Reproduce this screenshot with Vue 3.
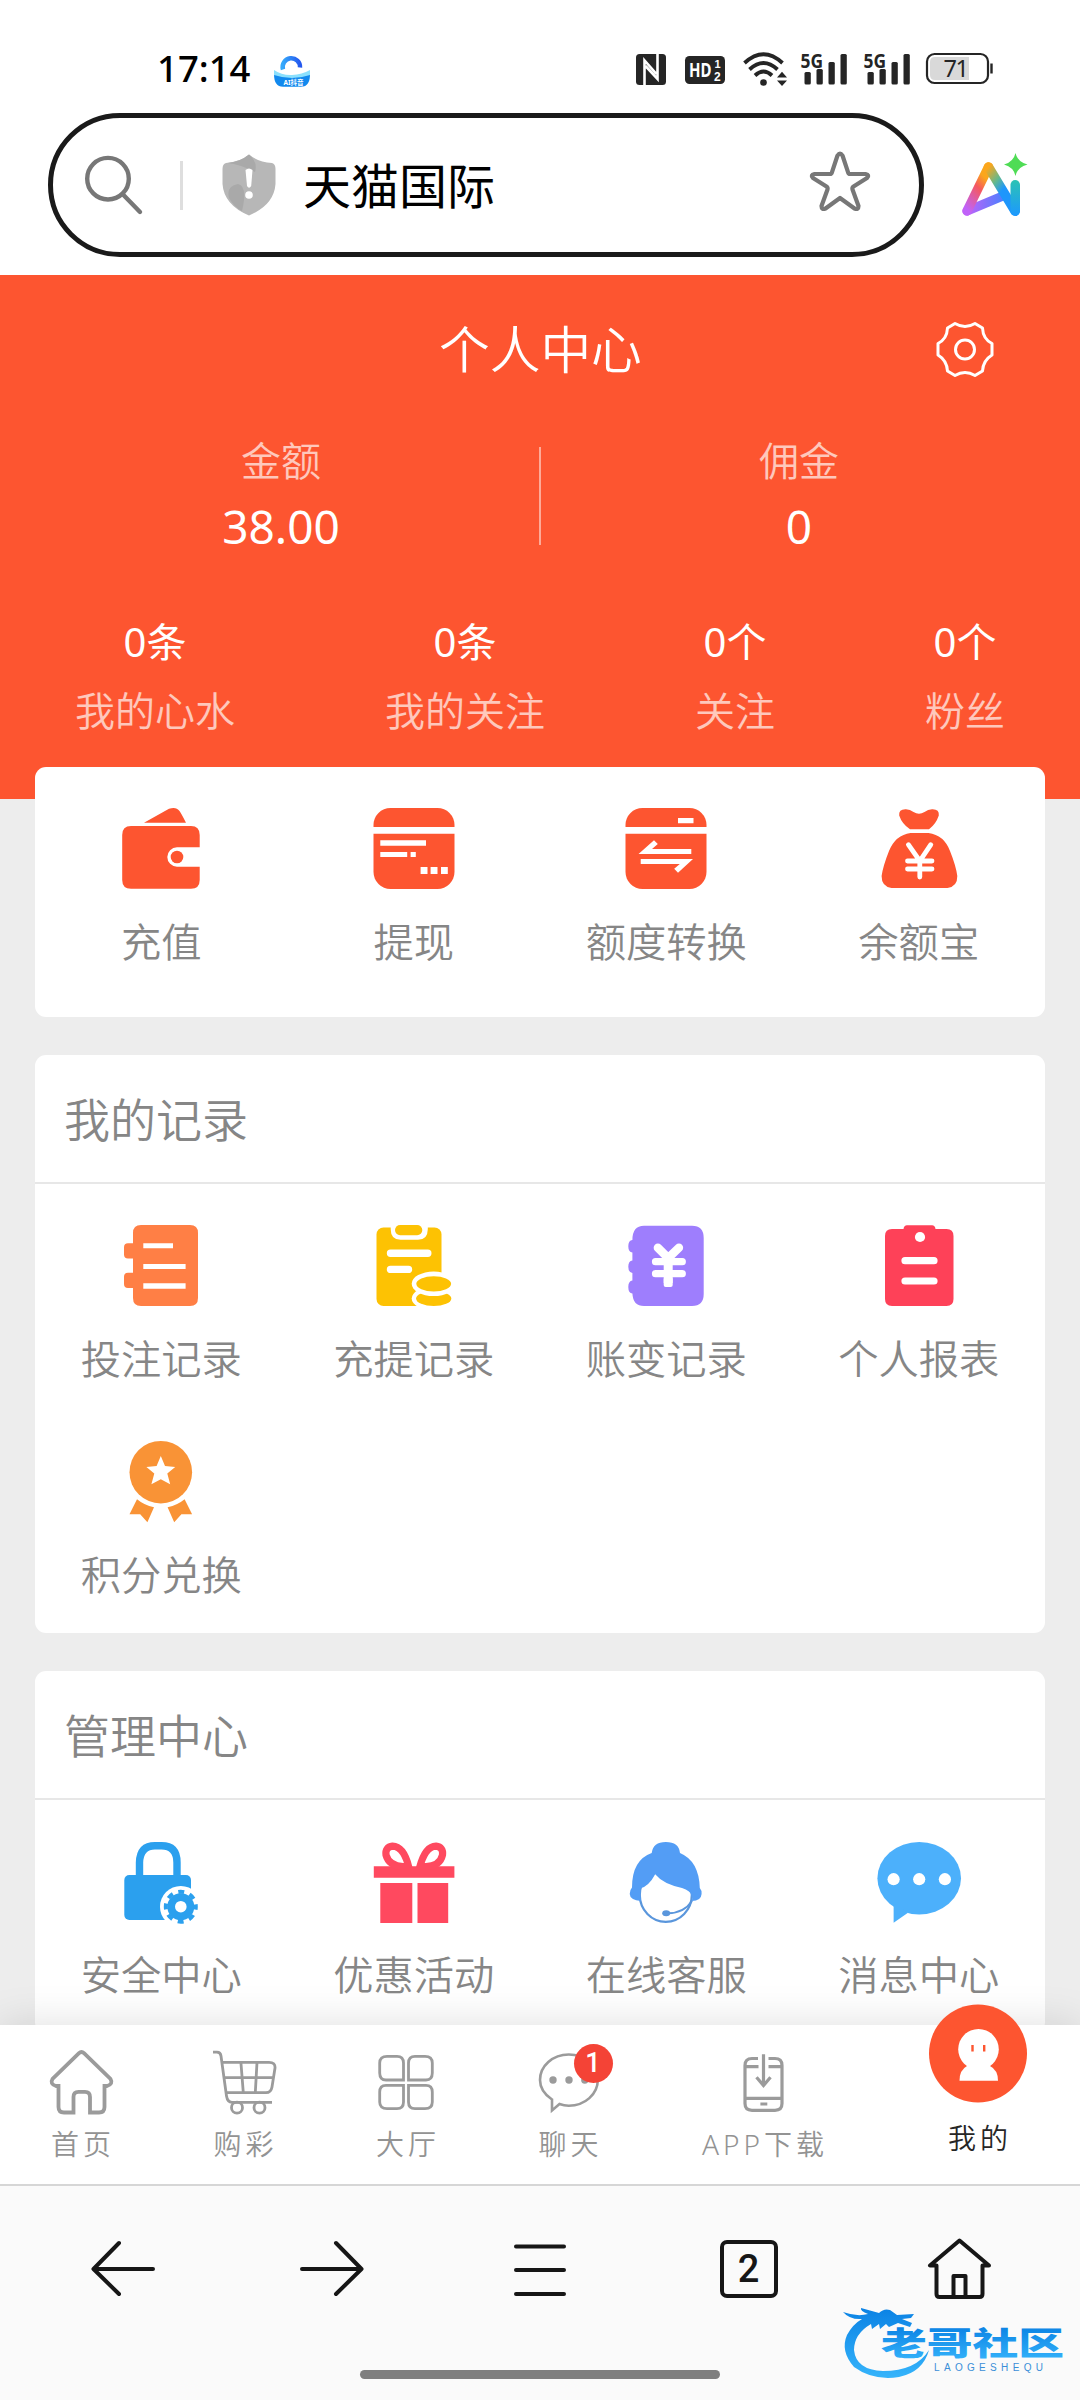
<script setup>
const stats = [
  { value: '0条', label: '我的心水' },
  { value: '0条', label: '我的关注' },
  { value: '0个', label: '关注' },
  { value: '0个', label: '粉丝' },
]

const yen = 'M31.4 37.7 L42.8 54 L53.8 37.7 M42.8 54 V70 M30.5 54 H55 M30.5 62 H55'

const wallet = [
  { label: '充值', svg: `<path fill="#fd5530" d="M25 15.7 L50 1.8 Q57 -.8 60.5 4 Q62 6 67 15.7Z"/><path fill="#fd5530" d="M12 19 H72 Q80.700 19 80.700 28 V40.300 H58 A9.700 9.700 0 0 0 58 59.700 H80.700 V73 Q80.700 81.700 72 81.700 H12 Q3.200 81.700 3.200 73 V28 Q3.200 19 12 19Z"/><circle cx="58" cy="50" r="6.300" fill="#fd5530"/>` },
  { label: '提现', svg: `<rect x="1.500" y="1" width="81" height="81" rx="17" fill="#fd5530"/><path fill="#fff" d="M0 20H84V26.700H0Z M8.300 33.300H54V38.700H8.300Z M8.300 45H35.200V50H8.300Z M38.600 45H43.800V50H38.600Z M48.600 60H55.500V67H48.600Z M58.600 60H65.500V67H58.600Z M69 60H75.800V67H69Z"/>` },
  { label: '额度转换', svg: `<rect x="1.500" y="1" width="81" height="81" rx="17" fill="#fd5530"/><path fill="#fff" d="M0 20H84V26.700H0Z M54 11H69.500V16.300H54Z M14.500 47 L30 33.300 L33.800 37 L28 42 H67.300 V47Z M16.700 52 H69 L54 65.700 L50.200 61.700 L55.800 57 H16.700Z"/>` },
  { label: '余额宝', svg: `<path fill="#fd5530" d="M33 22.300 Q25 17 22.200 8.500 Q21.500 2 29 2.300 Q33 2.500 36.500 5 Q42 8.500 47.500 5 Q51 2.500 55 2.300 Q62.500 2 61.800 8.500 Q59 17 52 22.300Z M33.500 26 H51.500 Q67 28 73 44 Q79 59 80.300 69 Q80.500 79.500 70.500 81 H14.500 Q4.500 79.500 4.600 69 Q6 59 12 44 Q18.500 28 33.500 26Z"/><path d="${yen}" fill="none" stroke="#fff" stroke-width="4.800" stroke-linecap="round"/>` },
]

const records = [
  { label: '投注记录', svg: `<path fill="#ff7f45" d="M22 0H71Q79 0 79 8V73Q79 81 71 81H22Q14 81 14 73V63H9Q5 63 5 59V51.700Q5 47.700 9 47.700H14V33.500H9Q5 33.500 5 29.500V22.200Q5 18.200 9 18.200H14V8Q14 0 22 0Z"/><path fill="#fff" d="M24.300 18.200H54V23.200H24.300Z M24.300 38.900H66.600V43.900H24.300Z M24.300 58.200H66.600V63.700H24.300Z"/>` },
  { label: '充提记录', svg: `<rect x="4.500" y="2.500" width="65" height="78.500" rx="7" fill="#fdc203"/><path fill="#fff" d="M18.700 0H55.800V4Q55.800 14.800 46 14.800H28.500Q18.700 14.800 18.700 4Z"/><rect x="23" y="0" width="27.300" height="10.200" rx="5.100" fill="#fdc203"/><path d="M18.500 28.200H55.800M18.500 44.400H36.500" stroke="#fff" stroke-width="7.400" stroke-linecap="round"/><ellipse cx="61.700" cy="73.500" rx="22" ry="12" fill="#fff"/><ellipse cx="61.700" cy="73.500" rx="17.600" ry="7.500" fill="#fdc203"/><ellipse cx="61.700" cy="58.800" rx="22" ry="12.300" fill="#fff"/><ellipse cx="61.700" cy="58.800" rx="17.400" ry="7.600" fill="#fdc203"/>` },
  { label: '账变记录', svg: `<path fill="#9e7efd" d="M20 .7H68Q79.700 .7 79.700 13V69Q79.700 81 68 81H20Q9 81 8.400 68.500Q4.300 68 4.300 62Q4.300 56 8.400 55.500V48Q4.300 47.500 4.300 41.700Q4.300 36 8.400 35.500V27.500Q4.300 27 4.300 21.300Q4.300 15.500 8.400 15Q8.400 .7 20 .7Z"/><path d="M33.900 22.700L44.200 33L54.900 22.700" fill="none" stroke="#fff" stroke-width="8.500" stroke-linecap="round"/><path d="M44.200 33V58" stroke="#fff" stroke-width="9"/><path d="M31.500 36.700H58.300M31.500 48.700H58.300" stroke="#fff" stroke-width="7.200" stroke-linecap="round"/><rect x="39.700" y="52" width="9" height="10" rx="2" fill="#fff"/>` },
  { label: '个人报表', svg: `<path fill="#fe4158" d="M15 4H26.500Q27 .3 30 .3H55Q58 .3 58.500 4H69.500Q76.500 4 76.500 11V74Q76.500 81 69.500 81H15Q8 81 8 74V11Q8 4 15 4Z"/><circle cx="43" cy="12" r="5.100" fill="#fff"/><path d="M28 35.700H57M28 56H57" stroke="#fff" stroke-width="7.200" stroke-linecap="round"/>` },
  { label: '积分兑换', svg: `<circle cx="41.800" cy="31.200" r="31.300" fill="#f99336"/><path fill="#fff" d="M41.800 15l4.200 10 10.200.9-7.900 6.600 2.900 10.700-9.400-5-9.400 5 2.900-10.700-7.900-6.600 10.200-.9Z"/><path fill="#f99336" d="M18 58.200Q25 64 35 66.300L28.400 81.200L21.200 73.200H10.500Z M65.600 58.200Q58.600 64 48.600 66.300L55.200 81.200L62.400 73.200H73.100Z"/>` },
]

const manage = [
  { label: '安全中心', svg: `<path d="M20.500 36V21.500Q21 4.800 36 4.800H42.500Q58 4.800 58 21.500V36" fill="none" stroke="#2ba0ee" stroke-width="7.400"/><rect x="5.300" y="34" width="66.700" height="45" rx="5" fill="#2ba0ee"/><circle cx="61.800" cy="65.700" r="20.800" fill="#fff"/><circle cx="61.800" cy="65.700" r="13.500" fill="#2ba0ee"/><circle cx="61.800" cy="65.700" r="15" fill="none" stroke="#2ba0ee" stroke-width="4" stroke-dasharray="6 5.780" stroke-dashoffset="3"/><circle cx="61.800" cy="65.700" r="5.800" fill="#fff"/>` },
  { label: '优惠活动', svg: `<path fill="#ff495f" d="M1.800 25.300H82.400V36.700H1.800Z M8.300 42H40.300V82H8.300Z M45.500 42H76.200V82H45.500Z"/><path d="M37 27Q32 5.500 20.500 5.200Q13 6 14 14Q17 25 31 25.500H37M47.500 27Q53 5.500 64 5.200Q71.500 6 70.500 14Q68 25 54 25.500H47.500" fill="none" stroke="#ff495f" stroke-width="7.200"/>` },
  { label: '在线客服', svg: `<ellipse cx="41.800" cy="54" rx="26" ry="26.800" fill="#fff" stroke="#5a96dc" stroke-width="2.200"/><path fill="#539df5" d="M27.700 12Q29 1 41.800 1Q55 1 56 12Q75 20 75.800 47Q77.800 49 77.600 53Q77 60 68 60Q68.500 56 67.300 54Q66.500 50 58 47Q39 43 31.200 33.300Q25 45 16.700 47.300Q16 54 17 60Q6 59 5.700 53Q5.700 49 8 46.500Q8 19 27.700 12Z"/><path d="M68 60Q60 72 44 72.300" fill="none" stroke="#5a96dc" stroke-width="2"/><ellipse cx="42.200" cy="72.300" rx="4" ry="3" fill="#5a96dc"/>` },
  { label: '消息中心', svg: `<ellipse cx="42.200" cy="37.200" rx="41.800" ry="36.200" fill="#4cb0fb"/><path fill="#4cb0fb" d="M16.600 62V81.700L31 71.800Z"/><g fill="#fff"><circle cx="16.600" cy="38.200" r="6.100"/><circle cx="42.200" cy="38.200" r="6.100"/><circle cx="67.900" cy="38.200" r="6.100"/></g>` },
]

const panels = [
  { title: '我的记录', items: records },
  { title: '管理中心', items: manage },
]

const tabs = [
  { label: '首页', width: 162, svg: `<path stroke-width="3.800" d="M30 3.200Q32.500 .8 35 3.200L61.500 29Q64.500 34 58 36H55.500V57Q55.500 62.500 50 62.500H41V47Q41 41.800 36 41.800H29.500Q24.500 41.800 24.500 47V62.500H15Q9.500 62.500 9.500 57V36H7Q.5 34 3.500 29Z"/>` },
  { label: '购彩', width: 163, svg: `<path stroke-width="2.800" d="M1 2.200H5Q8.500 2.200 9 6L14.500 46Q15.500 52.300 20 52.300H60M10.500 12.300H57Q63.500 12.300 63 18L60 37Q59 42.700 54 42.700H14.300M12.500 27.700H61.500M28.900 12.300L31.300 42.700M45 12.300L43.300 42.700"/><circle cx="25" cy="57.700" r="5.500" stroke-width="2.800"/><circle cx="47.500" cy="57.700" r="5.500" stroke-width="2.800"/>` },
  { label: '大厅', width: 162, svg: `<g stroke-width="2.800"><path d="M13 6.300H23Q29.500 6.300 29.500 13V30H12Q5.700 30 5.700 23V13Q5.700 6.300 13 6.300Z M41 6.300H51Q58.300 6.300 58.300 13V23Q58.300 30 52 30H34.500V13Q34.500 6.300 41 6.300Z M12 35.300H29.500V52Q29.500 58.700 23 58.700H13Q5.700 58.700 5.700 52V42Q5.700 35.300 12 35.300Z M34.500 35.300H52Q58.300 35.300 58.300 42V52Q58.300 58.700 51 58.700H41Q34.500 58.700 34.500 52Z"/></g>` },
  { label: '聊天', width: 163, badge: 1, svg: `<path stroke-width="2.600" d="M15 49.500V60.500L22.500 54Q27 55.700 31.800 55.700C48 55.700 60.800 44 60.800 30S48 4.500 31.800 4.500S3 16 3 30Q3 41.500 15 49.500Z"/><g fill="#9b9b9b" stroke="none"><circle cx="16" cy="30" r="3.700"/><circle cx="32" cy="30" r="3.700"/><circle cx="47.800" cy="30" r="3.700"/></g>` },
  { label: 'APP下载', width: 226, svg: `<path stroke-width="3.200" d="M27 8.500H21Q14 8.500 14 15.500V53.500Q14 60.300 21 60.300H44Q51 60.300 51 53.500V15.500Q51 8.500 44 8.500H37.500M14 16.700H27.500M37.500 16.700H51M14 48.300H51M29.400 54H36.300M32.500 4.300V35M25.500 27.300L32.500 35.500L39.500 27.300"/>` },
]
</script>

<template>
  <div class="screen">
    <header class="status">
      <span class="clock">17:14</span>
      <svg class="app-dot" viewBox="0 0 36 34">
        <defs>
          <linearGradient id="ring" x1="0" x2="1"><stop offset="0" stop-color="#35a9fb" /><stop offset="1" stop-color="#2458ee" /></linearGradient>
        </defs>
        <path d="M9 16.500A8.700 8.700 0 1 1 26 14.500" fill="none" stroke="url(#ring)" stroke-width="4.500" />
        <path d="M0 21Q9 24.500 18 24T36 20Q36.500 33.800 27 33.800H9Q0 33.800 0 21Z" fill="#1289ee" />
        <path d="M0 17Q8 22.500 18 22T36 17V22Q27 25 18 25T0 22Z" fill="#8be0fd" />
        <text x="9.500" y="32" font-size="6.500" font-weight="700" fill="#fff">AI抖音</text>
      </svg>
      <div class="signals">
        <svg class="s-nfc" viewBox="0 0 30 31">
          <rect width="30" height="31" rx="3.500" fill="#252525" />
          <path d="M8.500 31V6.500L20.500 20M21.500 0V25L9.500 12" fill="none" stroke="#fff" stroke-width="2.600" />
        </svg>
        <svg class="s-hd" viewBox="0 0 40 28">
          <rect width="40" height="28" rx="4.500" fill="#252525" />
          <text x="4" y="20.500" font-size="19.500" font-weight="700" textLength="22.500" lengthAdjust="spacingAndGlyphs" fill="#fff">HD</text>
          <text class="sim" x="29.500" y="12" font-size="11">1</text>
          <text class="sim" x="29" y="25" font-size="12">2</text>
        </svg>
        <svg class="s-wifi" viewBox="0 0 44 34">
          <g fill="none" stroke="#252525" stroke-width="3.800">
            <path d="M1.500 11Q20.500 -6.500 39.500 11" /><path d="M6.500 17.500Q20.500 4.500 34.500 17.500" /><path d="M12 23.500Q20.500 15.500 29 23.500" />
          </g>
          <circle cx="20.500" cy="30.500" r="3.300" fill="#252525" />
          <path d="M34 25.500L39 19.800L44 25.500ZM34 28.500L39 34L44 28.500Z" fill="#252525" />
        </svg>
        <svg v-for="n in 2" :key="n" class="s-bars" viewBox="0 0 46 33">
          <text x="-.5" y="15.500" font-size="20" font-weight="700" textLength="22.500" lengthAdjust="spacingAndGlyphs" fill="#252525">5G</text>
          <g fill="#252525">
            <rect x="3.500" y="20" width="6.300" height="12.500" rx="1.500" /><rect x="15.500" y="17" width="6.300" height="15.500" rx="1.500" />
            <rect x="27.500" y="10" width="6.300" height="22.500" rx="1.500" /><rect x="39.500" y="2" width="6.300" height="30.500" rx="1.500" />
          </g>
        </svg>
        <svg class="s-bat" viewBox="0 0 67 31">
          <rect x="1" y="1" width="61" height="29" rx="7.500" fill="#fff" stroke="#252525" stroke-width="2.200" />
          <path d="M9 4H43V27H9Q4 27 4 22V9Q4 4 9 4Z" fill="#d9d9d9" />
          <path d="M65.500 10.500V20.500" stroke="#252525" stroke-width="2.400" />
          <text x="17.500" y="23.800" font-size="23.500" font-weight="400" textLength="25.500" fill="#252525">71</text>
        </svg>
      </div>
    </header>

    <div class="address">
      <div class="pill">
        <svg class="glass" viewBox="0 0 60 60">
          <g fill="none" stroke="#777" stroke-width="4.400" stroke-linecap="round"><circle cx="24" cy="23.700" r="20.800" /><path d="M39 39.500L56 57" /></g>
        </svg>
        <i class="bar"></i>
        <svg class="shield" viewBox="0 0 54 62">
          <path d="M27 .5Q36 8 50 9Q53.500 10 53.500 15V30Q52 51 27 61.500Q2 51 .5 30V15Q.5 10 4 9Q18 8 27 .5Z" fill="#b7b7b7" />
          <path d="M27 .5Q36 8 33 18Q20 11 6 9Q18 8 27 .5ZM7 44Q4 32 16 30Q26 32 20 57Q12 53 7 44Z" fill="#a9a9a9" />
          <path d="M23.500 16Q27 13 30.500 16L29.200 32Q27 35.500 25 32Z" fill="#fff" /><circle cx="27" cy="41" r="3.800" fill="#fff" />
        </svg>
        <span class="site">天猫国际</span>
        <svg class="star" viewBox="0 0 62 60">
          <path d="M28.500 4.500Q31 .5 33.500 4.500L39 21.200Q39.500 23 41 23H56.500Q61 24 58 27L44.500 35.500Q43 36.500 43.500 38.500L49.500 55Q49.500 59 45.500 57.500L31 47L16.500 57.500Q12.500 59 12.500 55L18.500 38.500Q19 36.500 17.500 35.500L4 27Q1 24 5.500 23H21Q22.500 23 23 21.200Z" fill="none" stroke="#777" stroke-width="4.200" stroke-linejoin="round" />
        </svg>
      </div>
      <svg class="ai" viewBox="0 0 66 66">
        <defs>
          <linearGradient id="aiL" x1=".6" y1="0" x2=".1" y2="1"><stop offset=".1" stop-color="#fba61c" /><stop offset=".4" stop-color="#f5585f" /><stop offset="1" stop-color="#c062f8" /></linearGradient>
          <linearGradient id="aiB" x1="0" x2="1"><stop offset="0" stop-color="#c062f8" /><stop offset="1" stop-color="#4b80ff" /></linearGradient>
          <linearGradient id="aiR" x1="0" y1="0" x2=".7" y2="1"><stop offset="0" stop-color="#fba61c" /><stop offset=".35" stop-color="#62b98f" /><stop offset=".6" stop-color="#1e96fb" /></linearGradient>
          <linearGradient id="aiI" x1="0" y1="0" x2="0" y2="1"><stop offset="0" stop-color="#2cc3b4" /><stop offset="1" stop-color="#1c98ff" /></linearGradient>
        </defs>
        <g fill="none" stroke-width="9.500" stroke-linecap="round" stroke-linejoin="round">
          <path d="M5 57L42 41.500" stroke="url(#aiB)" stroke-width="9" /><path d="M5 57L26.500 13" stroke="url(#aiL)" /><path d="M26.500 13L53 57" stroke="url(#aiR)" />
        </g>
        <rect x="48.500" y="26" width="9.500" height="36" rx="4.700" fill="url(#aiI)" />
        <path d="M53.500 -1Q55.500 8 65.500 10.500Q55.500 13 53.500 22Q51.500 13 42 10.500Q51.500 8 53.500 -1Z" fill="#4fdc55" />
      </svg>
    </div>

    <main class="page">
      <section class="hero">
        <div class="title-row">
          <h1>个人中心</h1>
          <svg class="gear" viewBox="0 0 60 60">
            <g fill="none" stroke="#fff" stroke-width="3"><path d="M20 3.500Q30 9.500 40 3.500L47.500 8Q48 19 57 23.500V35Q48 40.500 47.500 51L40 55.500Q30 49.500 20 55.500L12.500 51Q12 40.500 3 35V23.500Q12 19 12.500 8Z" stroke-linejoin="round" /><circle cx="30" cy="29.500" r="9.500" /></g>
          </svg>
        </div>
        <div class="balance">
          <div><span>金额</span><b>38.00</b></div>
          <i></i>
          <div><span>佣金</span><b>0</b></div>
        </div>
        <div class="stats">
          <div v-for="s in stats" :key="s.label"><b>{{ s.value }}</b><span>{{ s.label }}</span></div>
        </div>
      </section>

      <section class="card quick">
        <div class="grid">
          <div v-for="it in wallet" :key="it.label" class="cell">
            <svg viewBox="0 0 84 84" v-html="it.svg"></svg><span>{{ it.label }}</span>
          </div>
        </div>
      </section>

      <section v-for="p in panels" :key="p.title" class="card">
        <h2>{{ p.title }}</h2>
        <div class="grid">
          <div v-for="it in p.items" :key="it.label" class="cell">
            <svg viewBox="0 0 84 84" v-html="it.svg"></svg><span>{{ it.label }}</span>
          </div>
        </div>
      </section>
    </main>

    <nav class="tabs">
      <div v-for="t in tabs" :key="t.label" class="tab" :style="{ width: t.width + 'px' }">
        <div class="tab-icon">
          <svg viewBox="0 0 64 64" fill="none" stroke="#9b9b9b" v-html="t.svg"></svg>
          <em v-if="t.badge">{{ t.badge }}</em>
        </div>
        <span>{{ t.label }}</span>
      </div>
      <div class="tab mine">
        <svg viewBox="0 0 98 99">
          <circle cx="49" cy="49.500" r="49" fill="#fd5530" />
          <circle cx="49.500" cy="45.300" r="20.300" fill="#fff" /><path d="M38 62H61Q69 66 69 76.700H30.500Q30.500 66 38 62Z" fill="#fff" />
          <path d="M43.500 41V47.500M55.200 41V47.500" stroke="#fd5530" stroke-width="2.400" />
        </svg>
        <span>我的</span>
      </div>
    </nav>

    <footer class="browser">
      <div class="tools">
        <svg viewBox="0 0 68 64"><path d="M30 6L4.500 32L30 57M5 32H64" /></svg>
        <svg viewBox="0 0 68 64"><path d="M38 6L63.500 32L38 57M63 32H4" /></svg>
        <svg viewBox="0 0 68 64"><path d="M10 9.500H58M10 33H58M10 57H58" /></svg>
        <div class="count"><span>2</span></div>
        <svg viewBox="0 0 68 64"><path d="M36.500 3.500L7 28.500H13.500V57Q13.500 60 16.500 60H56.500Q59.500 60 59.500 57V28.500H66ZM30.500 60V39H42.500V60" /></svg>
      </div>
      <div class="handle"></div>
      <svg class="mark" viewBox="0 0 224 76">
        <defs><linearGradient id="mk" x1="0" y1="0" x2="0" y2="1"><stop offset="0" stop-color="#0b82e4" /><stop offset="1" stop-color="#35b4fb" /></linearGradient></defs>
        <path d="M2 9Q16 14 27 11Q19 8 20 5L38 10Q43 5 49 7L56 12L73 11L70 15L61 16L71 20L69 24L57 20L48 24L45 21L39 26L38 21L31 26L30 21Q13 31 13 47Q15 67 42 68Q75 68 88 47Q82 69 58 74Q32 78 13 64Q-1 48 6 32Q12 21 21 16Q9 17 2 9Z" fill="url(#mk)" />
        <text class="brand" x="40" y="52" textLength="183" lengthAdjust="spacingAndGlyphs">老哥社区</text>
        <text class="brand-en" x="93" y="67.500" textLength="109">LAOGESHEQU</text>
      </svg>
    </footer>
  </div>
</template>

<style>
body { margin: 0; background: #fff; }
</style>

<style scoped>
.screen { width: 1080px; height: 2400px; display: flex; flex-direction: column; overflow: hidden; background: #fff; font-family: "Noto Sans", "Noto Sans CJK SC", sans-serif; font-weight: 350; color: #868686; }
svg { display: block; flex: none; overflow: visible; }
h1, h2, b, em { margin: 0; font-weight: inherit; font-style: normal; }

.status { height: 113px; display: flex; align-items: flex-start; }
.clock { width: 92px; margin: 43px 0 0 157px; font-size: 36.500px; line-height: 50px; font-weight: 500; color: #000; white-space: nowrap; }
.app-dot { width: 36px; height: 34px; margin: 53px 0 0 25px; }
.signals { display: flex; margin-left: 326px; padding-top: 52px; }
.s-nfc { width: 30px; height: 31px; margin-top: 2px; }
.s-hd { width: 40px; height: 28px; margin: 4px 0 0 19px; }
.sim { font-family: "Liberation Sans", sans-serif; font-weight: 700; fill: #fff; }
.s-wifi { width: 44px; height: 34px; margin-left: 18px; }
.s-bars { width: 46px; height: 33px; margin-left: 14px; }
.s-bars + .s-bars { margin-left: 17px; }
.s-bat { width: 67px; height: 31px; margin: 1px 0 0 16px; }

.address { height: 162px; display: flex; align-items: flex-start; padding-left: 48px; }
.pill { box-sizing: border-box; width: 876px; height: 144px; border: 5px solid #1a1a1a; border-radius: 72px; display: flex; align-items: flex-start; padding-left: 31px; }
.glass { width: 60px; height: 60px; margin-top: 37px; }
.bar { width: 3px; height: 49px; margin: 43px 0 0 36px; background: #dedede; }
.shield { width: 54px; height: 62px; margin: 36px 0 0 39px; }
.site { flex: 1; margin: 35px 0 0 27px; font-size: 48px; line-height: 66px; font-weight: 400; color: #000; }
.star { width: 62px; height: 60px; margin: 33px 48px 0 0; }
.ai { width: 66px; height: 66px; margin: 41px 0 0 38px; }

.page { flex: 1; min-height: 0; overflow: hidden; background: #ededed; }
.hero { height: 524px; background: #fd5530; color: #fff; display: flex; flex-direction: column; }
.title-row { height: 149px; display: flex; align-items: center; padding-left: 439px; }
h1 { width: 496px; font-size: 50.700px; line-height: 70px; }
.gear { width: 60px; height: 60px; }
.balance { height: 177px; display: flex; }
.balance div { width: 518px; padding-left: 22px; margin-right: -1px; display: flex; flex-direction: column; align-items: center; padding-top: 9px; }
.balance i { width: 2px; height: 98px; margin-top: 23px; background: rgba(255, 255, 255, .5); }
.balance i + div { padding-left: 0; margin-left: -1px; }
.balance span { font-size: 40px; line-height: 56px; opacity: .68; }
.balance b { font-size: 46px; line-height: 66px; margin-top: 4px; font-weight: 400; }
.stats { display: flex; justify-content: space-between; padding: 13px 75px 0; }
.stats div { display: flex; flex-direction: column; align-items: center; }
.stats b { font-size: 40px; line-height: 56px; font-weight: 400; }
.stats span { font-size: 40px; line-height: 56px; margin-top: 13px; opacity: .68; }

.card { width: 1010px; margin: 0 35px 38px; background: #fff; border-radius: 11px; padding-bottom: 17px; }
h2 { height: 127px; border-bottom: 2px solid #e7e7e7; padding-left: 29px; font-size: 46px; line-height: 129px; }
.grid { display: flex; flex-wrap: wrap; }
.cell { width: 252.500px; height: 216px; display: flex; flex-direction: column; align-items: center; }
.cell svg { width: 84px; height: 84px; margin-top: 41px; }
.cell span { margin-top: 22px; font-size: 40.300px; line-height: 56px; white-space: nowrap; }
.quick { position: relative; margin-top: -32px; box-sizing: border-box; height: 250px; }
.quick .cell svg { margin-top: 40px; }
.quick .cell span { margin-top: 23px; }

.tabs { position: relative; flex: none; height: 159px; display: flex; background: #fff; border-bottom: 2px solid #d6d6d6; box-shadow: 0 0 40px rgba(0, 0, 0, .13); }
.tab { display: flex; flex-direction: column; align-items: center; font-size: 28px; letter-spacing: 4px; color: #939393; }
.tab-icon { position: relative; margin-top: 25px; }
.tab-icon svg { width: 64px; height: 64px; }
.tab-icon em { position: absolute; left: 37px; top: -6px; width: 39px; height: 39px; border-radius: 50%; background: #f44336; color: #fff; font: 500 27px/39px Roboto, sans-serif; letter-spacing: 0; text-align: center; }
.tab span { line-height: 40px; margin-top: 10px; padding-left: 4px; white-space: nowrap; }
.mine { width: 204px; color: #262626; }
.mine svg { width: 98px; height: 99px; margin-top: -21px; }
.mine span { margin-top: 15px; }

.browser { position: relative; flex: none; height: 214px; background: #fafafa; }
.tools { display: flex; padding: 51px 89px 0; justify-content: space-between; }
.tools svg { width: 68px; height: 64px; fill: none; stroke: #161616; stroke-width: 4; stroke-linecap: round; stroke-linejoin: round; }
.count { width: 68px; height: 64px; display: flex; justify-content: center; }
.count span { box-sizing: border-box; width: 58px; height: 58px; margin-top: 3px; border: 4px solid #161616; border-radius: 7px; font: 500 38px/50px Roboto, sans-serif; text-align: center; color: #161616; }
.handle { width: 360px; height: 9px; margin: 69px auto 0; border-radius: 5px; background: #7f7f7f; }
.mark { position: absolute; left: 841px; top: 117px; width: 224px; height: 76px; }
.brand { font: 900 32px "Liberation Sans", "Noto Sans CJK SC", sans-serif; fill: url(#mk); }
.brand-en { font: 500 10px "Liberation Sans", sans-serif; fill: #3a8fd8; }
</style>
